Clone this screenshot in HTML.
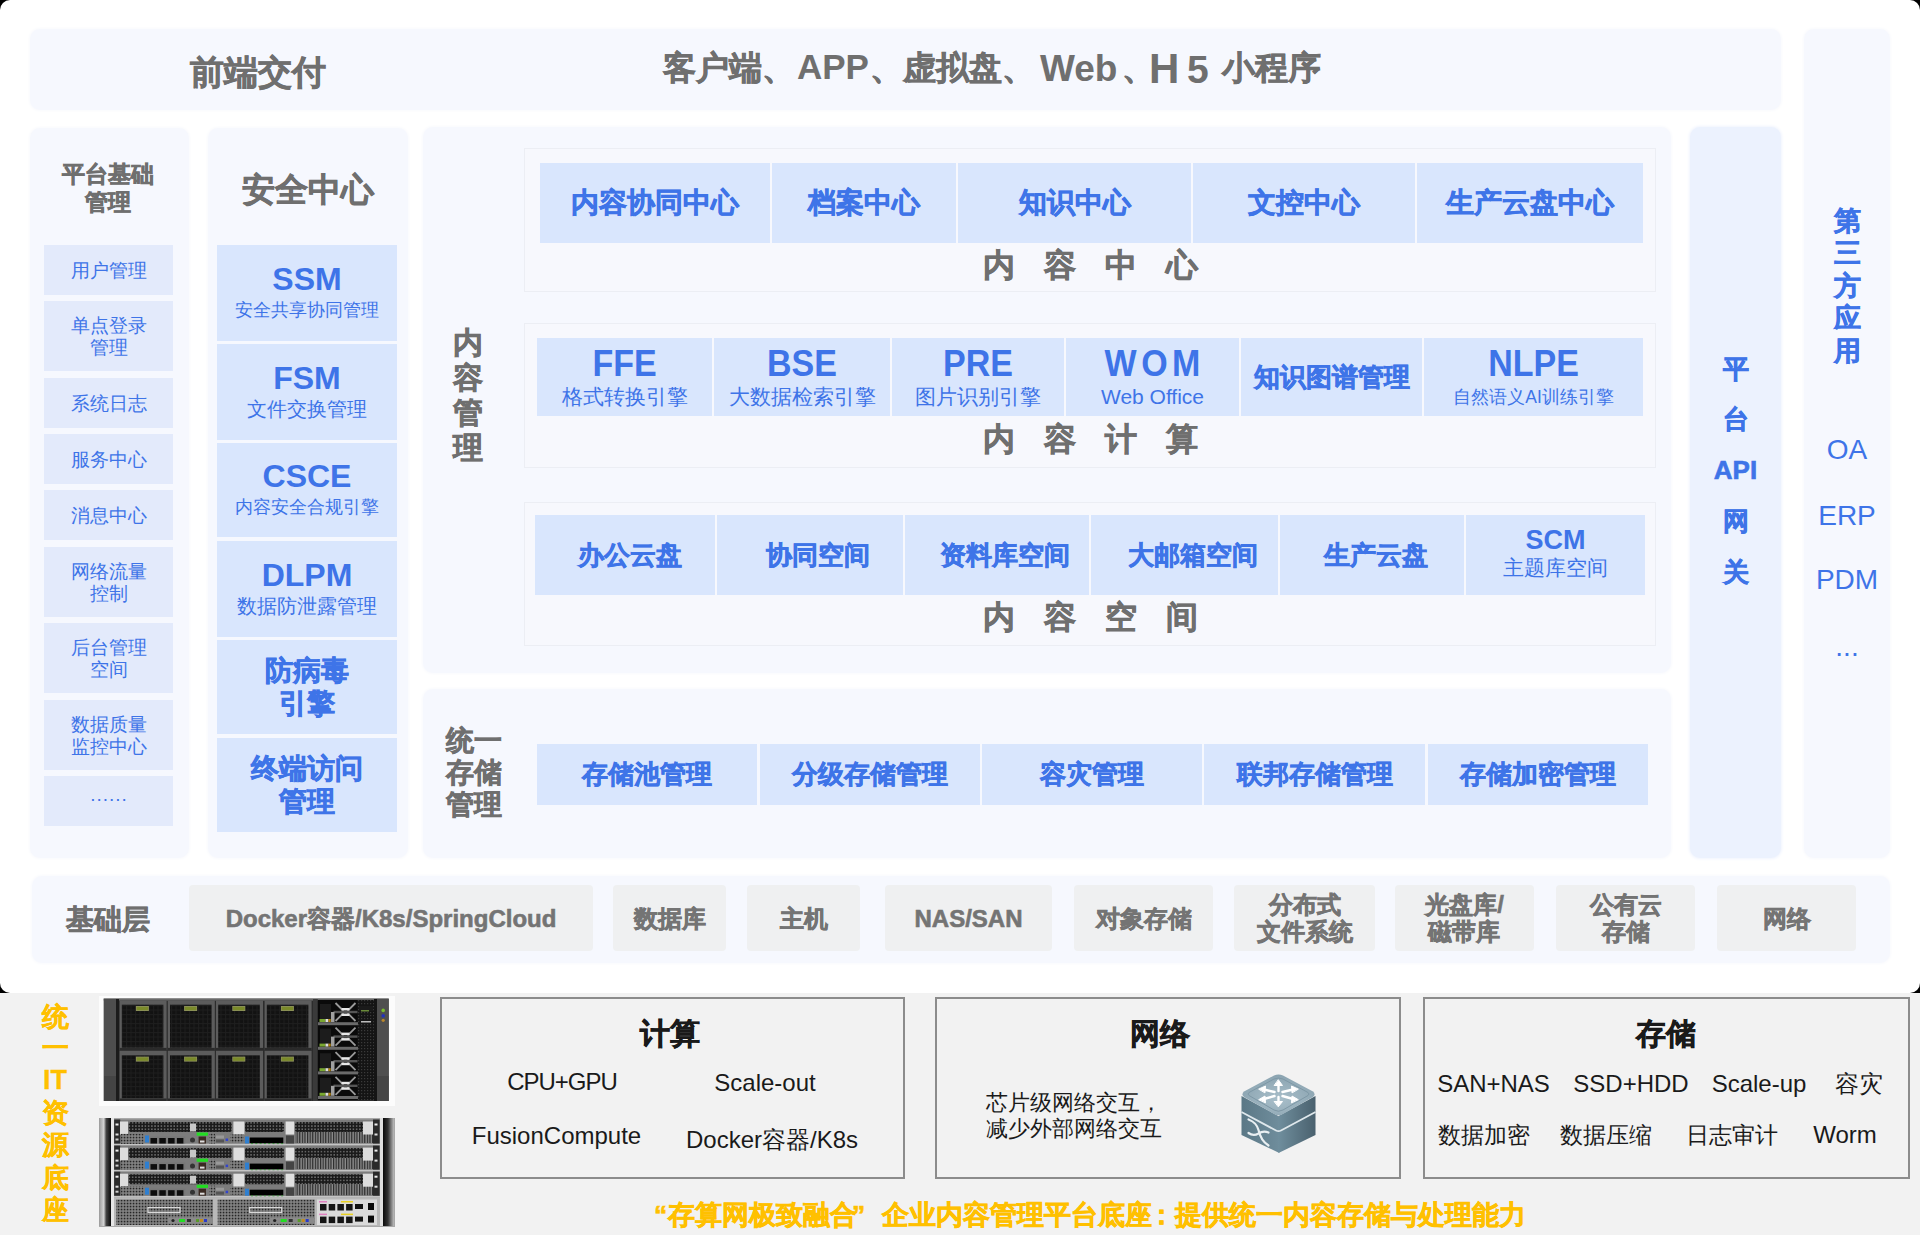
<!DOCTYPE html>
<html><head><meta charset="utf-8">
<style>
html,body{margin:0;padding:0;width:1920px;height:1235px;overflow:hidden;background:#000;}
body{position:relative;font-family:"Liberation Sans",sans-serif;}
.a{position:absolute;box-sizing:border-box;}
.c{position:absolute;box-sizing:border-box;display:flex;align-items:center;justify-content:center;text-align:center;white-space:nowrap;}
.pan{background:#f6f8fe;border-radius:10px;box-shadow:0 0 3px 1px #f9fafd;}
.ibox{background:#f7f8fd;border:1px solid #eceef4;}
.bl{background:#d9e6fd;color:#3e74e8;font-weight:bold;}
.li{background:#e3eafb;color:#3e74e8;font-size:19px;line-height:22px;}
.gt{color:#6f6f6f;font-weight:bold;}
.bs{background:#eff0f1;color:#747474;font-weight:bold;border-radius:4px;font-size:24px;line-height:27px;}
.st{-webkit-text-stroke:0.6px currentColor;}
.sub{font-weight:normal;display:block;-webkit-text-stroke:0;}
.bx{border:2px solid #8c8c8c;background:#f2f2f2;}
</style></head><body>
<div class="a " style="left:0px;top:0px;width:1920px;height:993px;background:#fff;border-radius:10px;"></div>
<div class="a " style="left:0px;top:993px;width:1920px;height:242px;background:#f2f2f2;"></div>
<div class="a pan" style="left:30px;top:29px;width:1751px;height:81px;"></div>
<div class="a pan" style="left:1804px;top:29px;width:86px;height:829px;"></div>
<div class="a pan" style="left:30px;top:128px;width:159px;height:730px;"></div>
<div class="a pan" style="left:208px;top:128px;width:200px;height:730px;"></div>
<div class="a pan" style="left:423px;top:127px;width:1248px;height:546px;"></div>
<div class="a pan" style="left:423px;top:689px;width:1248px;height:169px;"></div>
<div class="a pan" style="left:1690px;top:127px;width:91px;height:731px;background:#ecf2fe;box-shadow:0 0 3px 1px #f0f4fe;"></div>
<div class="a pan" style="left:32px;top:876px;width:1858px;height:87px;"></div>
<div class="c gt st" style="left:150px;top:40px;width:215px;height:65px;font-size:34px;">前端交付</div>
<div class="a st" style="left:663px;top:51px;width:300px;height:37px;color:#6f6f6f;font-weight:bold;white-space:nowrap;font-size:33px;line-height:33px;">客户端、</div>
<div class="a " style="left:797px;top:49px;width:300px;height:39px;color:#6f6f6f;font-weight:bold;white-space:nowrap;font-size:35px;line-height:35px;">APP</div>
<div class="a st" style="left:870px;top:51px;width:300px;height:37px;color:#6f6f6f;font-weight:bold;white-space:nowrap;font-size:33px;line-height:33px;">、虚拟盘、</div>
<div class="a " style="left:1040px;top:50px;width:300px;height:41px;color:#6f6f6f;font-weight:bold;white-space:nowrap;font-size:37px;line-height:37px;">Web</div>
<div class="a st" style="left:1122px;top:51px;width:300px;height:37px;color:#6f6f6f;font-weight:bold;white-space:nowrap;font-size:33px;line-height:33px;">、</div>
<div class="a " style="left:1149px;top:48px;width:300px;height:46px;color:#6f6f6f;font-weight:bold;white-space:nowrap;font-size:42px;line-height:42px;">H</div>
<div class="a " style="left:1187px;top:50px;width:300px;height:43px;color:#6f6f6f;font-weight:bold;white-space:nowrap;font-size:39px;line-height:39px;">5</div>
<div class="a st" style="left:1222px;top:51px;width:300px;height:37px;color:#6f6f6f;font-weight:bold;white-space:nowrap;font-size:33px;line-height:33px;">小程序</div>
<div class="c gt st" style="left:28px;top:150px;width:159px;height:76px;font-size:23px;line-height:28px;">平台基础<br>管理</div>
<div class="c li" style="left:44px;top:245px;width:129px;height:50px;padding-top:2px;">用户管理</div>
<div class="c li" style="left:44px;top:301px;width:129px;height:70px;padding-top:2px;">单点登录<br>管理</div>
<div class="c li" style="left:44px;top:378px;width:129px;height:50px;padding-top:2px;">系统日志</div>
<div class="c li" style="left:44px;top:434px;width:129px;height:50px;padding-top:2px;">服务中心</div>
<div class="c li" style="left:44px;top:490px;width:129px;height:50px;padding-top:2px;">消息中心</div>
<div class="c li" style="left:44px;top:547px;width:129px;height:70px;padding-top:2px;">网络流量<br>控制</div>
<div class="c li" style="left:44px;top:623px;width:129px;height:70px;padding-top:2px;">后台管理<br>空间</div>
<div class="c li" style="left:44px;top:700px;width:129px;height:70px;padding-top:2px;">数据质量<br>监控中心</div>
<div class="c li" style="left:44px;top:776px;width:129px;height:50px;padding-bottom:12px;letter-spacing:1px;padding-left:1px;">......</div>
<div class="c gt st" style="left:208px;top:160px;width:200px;height:60px;font-size:33px;">安全中心</div>
<div class="c bl" style="left:217px;top:245px;width:180px;height:96px;flex-direction:column;"><span style="font-size:32px;line-height:32px;margin-top:-1px;">SSM</span><span class="sub" style="font-size:18px;line-height:24px;margin-top:3px;">安全共享协同管理</span></div>
<div class="c bl" style="left:217px;top:344px;width:180px;height:96px;flex-direction:column;"><span style="font-size:32px;line-height:32px;margin-top:-1px;">FSM</span><span class="sub" style="font-size:19.5px;line-height:24px;margin-top:3px;">文件交换管理</span></div>
<div class="c bl" style="left:217px;top:443px;width:180px;height:94px;flex-direction:column;"><span style="font-size:32px;line-height:32px;margin-top:-1px;">CSCE</span><span class="sub" style="font-size:17.6px;line-height:24px;margin-top:3px;">内容安全合规引擎</span></div>
<div class="c bl" style="left:217px;top:541px;width:180px;height:96px;flex-direction:column;"><span style="font-size:32px;line-height:32px;margin-top:-1px;">DLPM</span><span class="sub" style="font-size:19.5px;line-height:24px;margin-top:3px;">数据防泄露管理</span></div>
<div class="c bl st" style="left:217px;top:640px;width:180px;height:94px;font-size:28px;line-height:33px;">防病毒<br>引擎</div>
<div class="c bl st" style="left:217px;top:738px;width:180px;height:94px;font-size:28px;line-height:33px;">终端访问<br>管理</div>
<div class="c gt st" style="left:428px;top:320px;width:80px;height:150px;font-size:30px;line-height:35px;">内<br>容<br>管<br>理</div>
<div class="a ibox" style="left:524px;top:148px;width:1132px;height:144px;"></div>
<div class="a ibox" style="left:524px;top:323px;width:1132px;height:145px;"></div>
<div class="a ibox" style="left:524px;top:502px;width:1132px;height:144px;"></div>
<div class="c bl st" style="left:540px;top:163px;width:230px;height:80px;font-size:28px;">内容协同中心</div>
<div class="c bl st" style="left:772px;top:163px;width:184px;height:80px;font-size:28px;">档案中心</div>
<div class="c bl st" style="left:958px;top:163px;width:233px;height:80px;font-size:28px;">知识中心</div>
<div class="c bl st" style="left:1193px;top:163px;width:222px;height:80px;font-size:28px;">文控中心</div>
<div class="c bl st" style="left:1417px;top:163px;width:226px;height:80px;font-size:28px;">生产云盘中心</div>
<div class="c gt st" style="left:977px;top:244px;width:44px;height:44px;font-size:32px;">内</div>
<div class="c gt st" style="left:1038px;top:244px;width:44px;height:44px;font-size:32px;">容</div>
<div class="c gt st" style="left:1099px;top:244px;width:44px;height:44px;font-size:32px;">中</div>
<div class="c gt st" style="left:1160px;top:244px;width:44px;height:44px;font-size:32px;">心</div>
<div class="c bl" style="left:537px;top:338px;width:175px;height:78px;flex-direction:column;padding-top:3px;"><span style="font-size:34px;line-height:32px;display:inline-block;transform:scaleY(1.08);">FFE</span><span class="sub" style="font-size:21px;line-height:28px;margin-top:4px;">格式转换引擎</span></div>
<div class="c bl" style="left:714px;top:338px;width:176px;height:78px;flex-direction:column;padding-top:3px;"><span style="font-size:34px;line-height:32px;display:inline-block;transform:scaleY(1.08);">BSE</span><span class="sub" style="font-size:21px;line-height:28px;margin-top:4px;">大数据检索引擎</span></div>
<div class="c bl" style="left:892px;top:338px;width:172px;height:78px;flex-direction:column;padding-top:3px;"><span style="font-size:34px;line-height:32px;display:inline-block;transform:scaleY(1.08);">PRE</span><span class="sub" style="font-size:21px;line-height:28px;margin-top:4px;">图片识别引擎</span></div>
<div class="c bl" style="left:1066px;top:338px;width:173px;height:78px;flex-direction:column;padding-top:3px;"><span style="font-size:34px;line-height:32px;display:inline-block;transform:scaleY(1.08);letter-spacing:4.5px;padding-left:4.5px;">WOM</span><span class="sub" style="font-size:21px;line-height:28px;margin-top:4px;">Web Office</span></div>
<div class="c bl st" style="left:1241px;top:338px;width:181px;height:78px;font-size:26px;">知识图谱管理</div>
<div class="c bl" style="left:1424px;top:338px;width:219px;height:78px;flex-direction:column;padding-top:3px;"><span style="font-size:34px;line-height:32px;display:inline-block;transform:scaleY(1.08);">NLPE</span><span class="sub" style="font-size:17.5px;line-height:28px;margin-top:4px;">自然语义AI训练引擎</span></div>
<div class="c gt st" style="left:977px;top:418px;width:44px;height:44px;font-size:32px;">内</div>
<div class="c gt st" style="left:1038px;top:418px;width:44px;height:44px;font-size:32px;">容</div>
<div class="c gt st" style="left:1099px;top:418px;width:44px;height:44px;font-size:32px;">计</div>
<div class="c gt st" style="left:1160px;top:418px;width:44px;height:44px;font-size:32px;">算</div>
<div class="c bl st" style="left:535px;top:515px;width:180px;height:80px;font-size:26px;padding-left:10px;">办公云盘</div>
<div class="c bl st" style="left:717px;top:515px;width:186px;height:80px;font-size:26px;padding-left:16px;">协同空间</div>
<div class="c bl st" style="left:905px;top:515px;width:184px;height:80px;font-size:26px;padding-left:15.0px;">资料库空间</div>
<div class="c bl st" style="left:1091px;top:515px;width:187px;height:80px;font-size:26px;padding-left:16px;">大邮箱空间</div>
<div class="c bl st" style="left:1280px;top:515px;width:184px;height:80px;font-size:26px;padding-left:8px;">生产云盘</div>
<div class="c bl" style="left:1466px;top:515px;width:179px;height:80px;flex-direction:column;"><span style="font-size:27px;line-height:30px;margin-top:-4px;">SCM</span><span class="sub" style="font-size:21px;line-height:26px;">主题库空间</span></div>
<div class="c gt st" style="left:977px;top:596px;width:44px;height:44px;font-size:32px;">内</div>
<div class="c gt st" style="left:1038px;top:596px;width:44px;height:44px;font-size:32px;">容</div>
<div class="c gt st" style="left:1099px;top:596px;width:44px;height:44px;font-size:32px;">空</div>
<div class="c gt st" style="left:1160px;top:596px;width:44px;height:44px;font-size:32px;">间</div>
<div class="c gt st" style="left:430px;top:708px;width:88px;height:130px;font-size:28px;line-height:32px;">统一<br>存储<br>管理</div>
<div class="c bl st" style="left:537px;top:744px;width:220px;height:61px;font-size:26px;">存储池管理</div>
<div class="c bl st" style="left:760px;top:744px;width:220px;height:61px;font-size:26px;">分级存储管理</div>
<div class="c bl st" style="left:982px;top:744px;width:220px;height:61px;font-size:26px;">容灾管理</div>
<div class="c bl st" style="left:1204px;top:744px;width:221px;height:61px;font-size:26px;">联邦存储管理</div>
<div class="c bl st" style="left:1428px;top:744px;width:220px;height:61px;font-size:26px;">存储加密管理</div>
<div class="c bl st" style="left:1690px;top:349.5px;width:91px;height:40.0px;background:none;font-size:26px;">平</div>
<div class="c bl st" style="left:1690px;top:399px;width:91px;height:40px;background:none;font-size:26px;">台</div>
<div class="c bl st" style="left:1690px;top:450px;width:91px;height:40px;background:none;font-size:26px;">API</div>
<div class="c bl st" style="left:1690px;top:501px;width:91px;height:40px;background:none;font-size:26px;">网</div>
<div class="c bl st" style="left:1690px;top:552px;width:91px;height:40px;background:none;font-size:26px;">关</div>
<div class="c bl st" style="left:1804px;top:205.0px;width:86px;height:32.0px;background:none;font-size:27px;">第</div>
<div class="c bl st" style="left:1804px;top:237.4px;width:86px;height:31.99999999999997px;background:none;font-size:27px;">三</div>
<div class="c bl st" style="left:1804px;top:269.8px;width:86px;height:32.0px;background:none;font-size:27px;">方</div>
<div class="c bl st" style="left:1804px;top:302.2px;width:86px;height:32.0px;background:none;font-size:27px;">应</div>
<div class="c bl st" style="left:1804px;top:334.6px;width:86px;height:32.0px;background:none;font-size:27px;">用</div>
<div class="c " style="left:1804px;top:430px;width:86px;height:40px;color:#3e74e8;font-size:28px;">OA</div>
<div class="c " style="left:1804px;top:495.5px;width:86px;height:40.0px;color:#3e74e8;font-size:28px;">ERP</div>
<div class="c " style="left:1804px;top:559.5px;width:86px;height:40.0px;color:#3e74e8;font-size:28px;">PDM</div>
<div class="c " style="left:1804px;top:627px;width:86px;height:40px;color:#3e74e8;font-size:28px;">...</div>
<div class="c gt st" style="left:40px;top:895px;width:135px;height:50px;font-size:28px;">基础层</div>
<div class="c bs st" style="left:189px;top:885px;width:404px;height:66px;">Docker容器/K8s/SpringCloud</div>
<div class="c bs st" style="left:613px;top:885px;width:113px;height:66px;">数据库</div>
<div class="c bs st" style="left:747px;top:885px;width:113px;height:66px;">主机</div>
<div class="c bs st" style="left:885px;top:885px;width:167px;height:66px;">NAS/SAN</div>
<div class="c bs st" style="left:1074px;top:885px;width:139px;height:66px;">对象存储</div>
<div class="c bs st" style="left:1234px;top:885px;width:141px;height:66px;">分布式<br>文件系统</div>
<div class="c bs st" style="left:1395px;top:885px;width:139px;height:66px;">光盘库/<br>磁带库</div>
<div class="c bs st" style="left:1556px;top:885px;width:139px;height:66px;">公有云<br>存储</div>
<div class="c bs st" style="left:1717px;top:885px;width:139px;height:66px;">网络</div>
<div class="c st" style="left:30px;top:1000.5px;width:50px;height:32.0px;color:#ffc000;font-weight:bold;font-size:27px;-webkit-text-stroke:0.3px #ffc000;">统</div>
<div class="c st" style="left:30px;top:1032px;width:50px;height:32px;color:#ffc000;font-weight:bold;font-size:27px;-webkit-text-stroke:0.3px #ffc000;">一</div>
<div class="c st" style="left:30px;top:1064px;width:50px;height:32px;color:#ffc000;font-weight:bold;font-size:27px;-webkit-text-stroke:0.3px #ffc000;">IT</div>
<div class="c st" style="left:30px;top:1097px;width:50px;height:32px;color:#ffc000;font-weight:bold;font-size:27px;-webkit-text-stroke:0.3px #ffc000;">资</div>
<div class="c st" style="left:30px;top:1129px;width:50px;height:32px;color:#ffc000;font-weight:bold;font-size:27px;-webkit-text-stroke:0.3px #ffc000;">源</div>
<div class="c st" style="left:30px;top:1161.5px;width:50px;height:32.0px;color:#ffc000;font-weight:bold;font-size:27px;-webkit-text-stroke:0.3px #ffc000;">底</div>
<div class="c st" style="left:30px;top:1193.5px;width:50px;height:32.0px;color:#ffc000;font-weight:bold;font-size:27px;-webkit-text-stroke:0.3px #ffc000;">座</div>
<svg class="a" style="left:99px;top:996px;" width="296" height="110" viewBox="0 0 296 110">
<defs>
<pattern id="bm" width="4.5" height="4.5" patternUnits="userSpaceOnUse"><rect width="4.5" height="4.5" fill="#121212"/><rect x="0" y="0" width="4.5" height="1" fill="#1e1e1e"/><rect x="0" y="0" width="1" height="4.5" fill="#1e1e1e"/></pattern>
<pattern id="rg" width="3" height="3" patternUnits="userSpaceOnUse"><rect width="3" height="3" fill="#141414"/><rect x="1" y="1" width="1.2" height="1.2" fill="#3a3a3a"/></pattern>
</defs>
<rect x="0" y="0" width="296" height="110" fill="#fcfcfc"/>
<rect x="4.7" y="2.6" width="285" height="102.4" fill="#2c2c2c"/>
<rect x="4.7" y="2.6" width="285" height="2" fill="#6a6a6a"/>
<rect x="5" y="3" width="12" height="102" fill="#4e4e4e"/><rect x="5" y="80" width="12" height="25" fill="#444"/><rect x="17" y="3" width="3" height="102" fill="#1b1b1b"/>
<rect x="20.6" y="4.4" width="47" height="50" fill="#5c5c5c"/>
<rect x="22.8" y="8.7" width="41.6" height="43" fill="url(#bm)"/>
<rect x="20.6" y="51.9" width="47" height="2.5" fill="#2a2a2a"/>
<rect x="36.900000000000006" y="10.0" width="13" height="5" fill="#8f9160"/>
<rect x="37.6" y="10.8" width="11.6" height="3.4" fill="#7a8a2a"/>
<rect x="68.8" y="4.4" width="47" height="50" fill="#5c5c5c"/>
<rect x="71.0" y="8.7" width="41.6" height="43" fill="url(#bm)"/>
<rect x="68.8" y="51.9" width="47" height="2.5" fill="#2a2a2a"/>
<rect x="85.1" y="10.0" width="13" height="5" fill="#8f9160"/>
<rect x="85.8" y="10.8" width="11.6" height="3.4" fill="#7a8a2a"/>
<rect x="117" y="4.4" width="47" height="50" fill="#5c5c5c"/>
<rect x="119.2" y="8.7" width="41.6" height="43" fill="url(#bm)"/>
<rect x="117" y="51.9" width="47" height="2.5" fill="#2a2a2a"/>
<rect x="133.3" y="10.0" width="13" height="5" fill="#8f9160"/>
<rect x="134" y="10.8" width="11.6" height="3.4" fill="#7a8a2a"/>
<rect x="165.6" y="4.4" width="47" height="50" fill="#5c5c5c"/>
<rect x="167.79999999999998" y="8.7" width="41.6" height="43" fill="url(#bm)"/>
<rect x="165.6" y="51.9" width="47" height="2.5" fill="#2a2a2a"/>
<rect x="181.9" y="10.0" width="13" height="5" fill="#8f9160"/>
<rect x="182.6" y="10.8" width="11.6" height="3.4" fill="#7a8a2a"/>
<rect x="20.6" y="55" width="47" height="50" fill="#5c5c5c"/>
<rect x="22.8" y="59.3" width="41.6" height="43" fill="url(#bm)"/>
<rect x="20.6" y="102.5" width="47" height="2.5" fill="#2a2a2a"/>
<rect x="36.900000000000006" y="60.6" width="13" height="5" fill="#8f9160"/>
<rect x="37.6" y="61.4" width="11.6" height="3.4" fill="#7a8a2a"/>
<rect x="68.8" y="55" width="47" height="50" fill="#5c5c5c"/>
<rect x="71.0" y="59.3" width="41.6" height="43" fill="url(#bm)"/>
<rect x="68.8" y="102.5" width="47" height="2.5" fill="#2a2a2a"/>
<rect x="85.1" y="60.6" width="13" height="5" fill="#8f9160"/>
<rect x="85.8" y="61.4" width="11.6" height="3.4" fill="#7a8a2a"/>
<rect x="117" y="55" width="47" height="50" fill="#5c5c5c"/>
<rect x="119.2" y="59.3" width="41.6" height="43" fill="url(#bm)"/>
<rect x="117" y="102.5" width="47" height="2.5" fill="#2a2a2a"/>
<rect x="133.3" y="60.6" width="13" height="5" fill="#8f9160"/>
<rect x="134" y="61.4" width="11.6" height="3.4" fill="#7a8a2a"/>
<rect x="165.6" y="55" width="47" height="50" fill="#5c5c5c"/>
<rect x="167.79999999999998" y="59.3" width="41.6" height="43" fill="url(#bm)"/>
<rect x="165.6" y="102.5" width="47" height="2.5" fill="#2a2a2a"/>
<rect x="181.9" y="60.6" width="13" height="5" fill="#8f9160"/>
<rect x="182.6" y="61.4" width="11.6" height="3.4" fill="#7a8a2a"/>
<rect x="214" y="3" width="4.8" height="102" fill="#3a3a3a"/>
<rect x="218.8" y="4" width="40" height="100" fill="#0a0a0a"/>
<rect x="219" y="26.2" width="40" height="3" fill="#6a6a6a"/>
<rect x="221" y="8.0" width="11" height="16" fill="#1c1c1c"/>
<path d="M236.5 7.0 L244.5 15.0 M256.5 7.0 L248.5 15.0 M236.5 25.0 L244.5 17.0 M256.5 25.0 L248.5 17.0" stroke="#9a9a9a" stroke-width="1.8"/>
<rect x="242.5" y="12.0" width="8" height="2.5" fill="#e8e8e8"/><rect x="242.5" y="17.5" width="8" height="2.5" fill="#e8e8e8"/>
<rect x="234.5" y="14.8" width="24" height="2.4" fill="#555"/>
<rect x="232" y="16.0" width="3.5" height="10" fill="#a0a0a0"/>
<rect x="220.5" y="23.0" width="6" height="3" fill="#7aa832"/><rect x="226.5" y="23.0" width="3" height="3" fill="#e0e0e0"/><rect x="229.5" y="23.0" width="2.2" height="3" fill="#b8860b"/>
<rect x="219" y="50.8" width="40" height="3" fill="#6a6a6a"/>
<rect x="221" y="32.6" width="11" height="16" fill="#1c1c1c"/>
<path d="M236.5 31.6 L244.5 39.6 M256.5 31.6 L248.5 39.6 M236.5 49.6 L244.5 41.6 M256.5 49.6 L248.5 41.6" stroke="#9a9a9a" stroke-width="1.8"/>
<rect x="242.5" y="36.6" width="8" height="2.5" fill="#e8e8e8"/><rect x="242.5" y="42.1" width="8" height="2.5" fill="#e8e8e8"/>
<rect x="234.5" y="39.4" width="24" height="2.4" fill="#555"/>
<rect x="232" y="40.6" width="3.5" height="10" fill="#a0a0a0"/>
<rect x="220.5" y="47.6" width="6" height="3" fill="#7aa832"/><rect x="226.5" y="47.6" width="3" height="3" fill="#e0e0e0"/><rect x="229.5" y="47.6" width="2.2" height="3" fill="#b8860b"/>
<rect x="219" y="75.4" width="40" height="3" fill="#6a6a6a"/>
<rect x="221" y="57.2" width="11" height="16" fill="#1c1c1c"/>
<path d="M236.5 56.2 L244.5 64.2 M256.5 56.2 L248.5 64.2 M236.5 74.2 L244.5 66.2 M256.5 74.2 L248.5 66.2" stroke="#9a9a9a" stroke-width="1.8"/>
<rect x="242.5" y="61.2" width="8" height="2.5" fill="#e8e8e8"/><rect x="242.5" y="66.7" width="8" height="2.5" fill="#e8e8e8"/>
<rect x="234.5" y="64.0" width="24" height="2.4" fill="#555"/>
<rect x="232" y="65.2" width="3.5" height="10" fill="#a0a0a0"/>
<rect x="220.5" y="72.2" width="6" height="3" fill="#7aa832"/><rect x="226.5" y="72.2" width="3" height="3" fill="#e0e0e0"/><rect x="229.5" y="72.2" width="2.2" height="3" fill="#b8860b"/>
<rect x="219" y="100.00000000000001" width="40" height="3" fill="#6a6a6a"/>
<rect x="221" y="81.80000000000001" width="11" height="16" fill="#1c1c1c"/>
<path d="M236.5 80.80000000000001 L244.5 88.80000000000001 M256.5 80.80000000000001 L248.5 88.80000000000001 M236.5 98.80000000000001 L244.5 90.80000000000001 M256.5 98.80000000000001 L248.5 90.80000000000001" stroke="#9a9a9a" stroke-width="1.8"/>
<rect x="242.5" y="85.80000000000001" width="8" height="2.5" fill="#e8e8e8"/><rect x="242.5" y="91.30000000000001" width="8" height="2.5" fill="#e8e8e8"/>
<rect x="234.5" y="88.60000000000001" width="24" height="2.4" fill="#555"/>
<rect x="232" y="89.80000000000001" width="3.5" height="10" fill="#a0a0a0"/>
<rect x="220.5" y="96.80000000000001" width="6" height="3" fill="#7aa832"/><rect x="226.5" y="96.80000000000001" width="3" height="3" fill="#e0e0e0"/><rect x="229.5" y="96.80000000000001" width="2.2" height="3" fill="#b8860b"/>
<rect x="259" y="4" width="16" height="100" fill="url(#rg)"/>
<rect x="260" y="10" width="14" height="5" fill="#1a1a1a"/><rect x="262" y="14" width="8" height="1.5" fill="#6a8a3a"/><rect x="262" y="25" width="10" height="1.5" fill="#bbb"/>
<rect x="275" y="3" width="3" height="102" fill="#151515"/><rect x="278" y="3" width="11.6" height="102" fill="#4f4f4f"/><rect x="278" y="80" width="11.6" height="25" fill="#454545"/>
<circle cx="284.2" cy="14.4" r="1.8" fill="#7bbb2e"/><circle cx="284.2" cy="19.8" r="1.8" fill="#2233bb"/><circle cx="284.2" cy="24.3" r="1.6" fill="#b8862b"/>
</svg>
<svg class="a" style="left:99px;top:1118px;" width="296" height="109" viewBox="0 0 296 109">
<defs>
<linearGradient id="ear" x1="0" x2="1"><stop offset="0" stop-color="#999"/><stop offset="0.4" stop-color="#d5d5d5"/><stop offset="0.6" stop-color="#444"/><stop offset="1" stop-color="#0a0a0a"/></linearGradient>
<linearGradient id="ear2" x1="0" x2="1"><stop offset="0" stop-color="#0a0a0a"/><stop offset="0.45" stop-color="#333"/><stop offset="1" stop-color="#bdbdbd"/></linearGradient>
<pattern id="g1" width="3.2" height="3.2" patternUnits="userSpaceOnUse"><rect width="3.2" height="3.2" fill="#1a1a1a"/><rect x="1" y="1" width="1.3" height="1.3" fill="#8a8a8a"/></pattern>
<pattern id="g2" width="2.6" height="3" patternUnits="userSpaceOnUse"><rect width="2.6" height="3" fill="#8c8c8c"/><rect x="0" y="0" width="1.2" height="3" fill="#2a2a2a"/></pattern>
<pattern id="g3" width="3" height="3" patternUnits="userSpaceOnUse"><rect width="3" height="3" fill="#8a8a8a"/><rect x="0.7" y="0.7" width="1.7" height="1.7" fill="#262626"/></pattern>
</defs>
<rect x="0" y="0" width="296" height="109" fill="#a9a9a9"/>
<rect x="0" y="0" width="12" height="108" fill="url(#ear)"/>
<rect x="12" y="0" width="3" height="108" fill="#e6e6e6"/>
<rect x="281" y="0" width="3" height="108" fill="#e0e0e0"/>
<rect x="284" y="0" width="11" height="108" fill="url(#ear2)"/>
<rect x="15" y="1.5" width="266" height="26" fill="#7c7c7c"/>
<rect x="15" y="25.7" width="266" height="1.8" fill="#c4c4c4"/>
<rect x="15.2" y="1.5" width="6" height="24" fill="#2a2a2a"/><rect x="16.5" y="5.5" width="3" height="2" fill="#eee"/><rect x="16.5" y="15.5" width="3" height="2" fill="#ddd"/><rect x="16.5" y="20.5" width="3" height="2" fill="#ccc"/>
<rect x="274" y="1.5" width="6.5" height="24" fill="#2a2a2a"/><rect x="275.5" y="5.5" width="3" height="2" fill="#eee"/><rect x="275.5" y="15.5" width="3" height="2" fill="#ddd"/>
<rect x="21" y="3.5" width="8" height="13" fill="#dcdcdc"/>
<rect x="29.7" y="4.0" width="103" height="10" rx="2" fill="url(#g1)"/>
<rect x="91" y="5.5" width="6" height="8" fill="#c8c8c8"/>
<rect x="134.4" y="3.5" width="11" height="13" fill="#dedede"/>
<rect x="146" y="4.0" width="39" height="10" rx="2" fill="url(#g1)"/>
<rect x="186.6" y="3.5" width="8.6" height="13" fill="#e0e0e0"/>
<rect x="196" y="4.0" width="68" height="10" rx="2" fill="url(#g1)"/>
<rect x="196" y="14.0" width="78" height="11" fill="url(#g2)"/>
<rect x="264" y="3.5" width="10" height="13" fill="#dcdcdc"/>
<rect x="22" y="15.9" width="22.5" height="10" fill="url(#g3)"/>
<rect x="46" y="17.5" width="4" height="7" fill="#2f7fd0"/>
<rect x="50.8" y="18.5" width="35.5" height="7" fill="#777"/>
<rect x="51.5" y="20.0" width="6.5" height="5.5" fill="#0d0d0d"/>
<rect x="60.3" y="20.0" width="6.5" height="5.5" fill="#0d0d0d"/>
<rect x="69.1" y="20.0" width="6.5" height="5.5" fill="#0d0d0d"/>
<rect x="77.9" y="20.0" width="6.5" height="5.5" fill="#0d0d0d"/>
<circle cx="93.5" cy="22.0" r="2.5" fill="#333"/>
<rect x="97.7" y="14.5" width="11.3" height="3.2" fill="#22dd22"/><rect x="99.6" y="18.5" width="7.4" height="7" fill="#3a2a22"/><rect x="101" y="22.5" width="4.5" height="2" fill="#ddd"/>
<rect x="110" y="15.5" width="6" height="10" fill="url(#g3)"/><rect x="117" y="17.5" width="8" height="3" fill="#999"/><rect x="117" y="21.5" width="8" height="3" fill="#555"/>
<rect x="126.6" y="20.5" width="2.5" height="2.5" fill="#3344cc"/><rect x="131" y="16.5" width="14" height="8" fill="url(#g3)"/>
<rect x="146" y="18.5" width="4" height="7" fill="#2f7fd0"/><rect x="150.7" y="19.5" width="33.6" height="5.6" fill="#000"/>
<rect x="152.0" y="25.1" width="2" height="1" fill="#3a8a3a"/>
<rect x="156.3" y="25.1" width="2" height="1" fill="#3a8a3a"/>
<rect x="160.6" y="25.1" width="2" height="1" fill="#3a8a3a"/>
<rect x="164.9" y="25.1" width="2" height="1" fill="#3a8a3a"/>
<rect x="169.2" y="25.1" width="2" height="1" fill="#3a8a3a"/>
<rect x="173.5" y="25.1" width="2" height="1" fill="#3a8a3a"/>
<rect x="177.8" y="25.1" width="2" height="1" fill="#3a8a3a"/>
<rect x="182.1" y="25.1" width="2" height="1" fill="#3a8a3a"/>
<rect x="187" y="17.5" width="8" height="8" fill="#444"/>
<rect x="15" y="27.6" width="266" height="26" fill="#7c7c7c"/>
<rect x="15" y="51.8" width="266" height="1.8" fill="#c4c4c4"/>
<rect x="15.2" y="27.6" width="6" height="24" fill="#2a2a2a"/><rect x="16.5" y="31.6" width="3" height="2" fill="#eee"/><rect x="16.5" y="41.6" width="3" height="2" fill="#ddd"/><rect x="16.5" y="46.6" width="3" height="2" fill="#ccc"/>
<rect x="274" y="27.6" width="6.5" height="24" fill="#2a2a2a"/><rect x="275.5" y="31.6" width="3" height="2" fill="#eee"/><rect x="275.5" y="41.6" width="3" height="2" fill="#ddd"/>
<rect x="21" y="29.6" width="8" height="13" fill="#dcdcdc"/>
<rect x="29.7" y="30.1" width="103" height="10" rx="2" fill="url(#g1)"/>
<rect x="91" y="31.6" width="6" height="8" fill="#c8c8c8"/>
<rect x="134.4" y="29.6" width="11" height="13" fill="#dedede"/>
<rect x="146" y="30.1" width="39" height="10" rx="2" fill="url(#g1)"/>
<rect x="186.6" y="29.6" width="8.6" height="13" fill="#e0e0e0"/>
<rect x="196" y="30.1" width="68" height="10" rx="2" fill="url(#g1)"/>
<rect x="196" y="40.1" width="78" height="11" fill="url(#g2)"/>
<rect x="264" y="29.6" width="10" height="13" fill="#dcdcdc"/>
<rect x="22" y="42.0" width="22.5" height="10" fill="url(#g3)"/>
<rect x="46" y="43.6" width="4" height="7" fill="#2f7fd0"/>
<rect x="50.8" y="44.6" width="35.5" height="7" fill="#777"/>
<rect x="51.5" y="46.1" width="6.5" height="5.5" fill="#0d0d0d"/>
<rect x="60.3" y="46.1" width="6.5" height="5.5" fill="#0d0d0d"/>
<rect x="69.1" y="46.1" width="6.5" height="5.5" fill="#0d0d0d"/>
<rect x="77.9" y="46.1" width="6.5" height="5.5" fill="#0d0d0d"/>
<circle cx="93.5" cy="48.1" r="2.5" fill="#333"/>
<rect x="97.7" y="40.6" width="11.3" height="3.2" fill="#22dd22"/><rect x="99.6" y="44.6" width="7.4" height="7" fill="#3a2a22"/><rect x="101" y="48.6" width="4.5" height="2" fill="#ddd"/>
<rect x="110" y="41.6" width="6" height="10" fill="url(#g3)"/><rect x="117" y="43.6" width="8" height="3" fill="#999"/><rect x="117" y="47.6" width="8" height="3" fill="#555"/>
<rect x="126.6" y="46.6" width="2.5" height="2.5" fill="#3344cc"/><rect x="131" y="42.6" width="14" height="8" fill="url(#g3)"/>
<rect x="146" y="44.6" width="4" height="7" fill="#2f7fd0"/><rect x="150.7" y="45.6" width="33.6" height="5.6" fill="#000"/>
<rect x="152.0" y="51.2" width="2" height="1" fill="#3a8a3a"/>
<rect x="156.3" y="51.2" width="2" height="1" fill="#3a8a3a"/>
<rect x="160.6" y="51.2" width="2" height="1" fill="#3a8a3a"/>
<rect x="164.9" y="51.2" width="2" height="1" fill="#3a8a3a"/>
<rect x="169.2" y="51.2" width="2" height="1" fill="#3a8a3a"/>
<rect x="173.5" y="51.2" width="2" height="1" fill="#3a8a3a"/>
<rect x="177.8" y="51.2" width="2" height="1" fill="#3a8a3a"/>
<rect x="182.1" y="51.2" width="2" height="1" fill="#3a8a3a"/>
<rect x="187" y="43.6" width="8" height="8" fill="#444"/>
<rect x="15" y="53.7" width="266" height="26" fill="#7c7c7c"/>
<rect x="15" y="77.9" width="266" height="1.8" fill="#c4c4c4"/>
<rect x="15.2" y="53.7" width="6" height="24" fill="#2a2a2a"/><rect x="16.5" y="57.7" width="3" height="2" fill="#eee"/><rect x="16.5" y="67.7" width="3" height="2" fill="#ddd"/><rect x="16.5" y="72.7" width="3" height="2" fill="#ccc"/>
<rect x="274" y="53.7" width="6.5" height="24" fill="#2a2a2a"/><rect x="275.5" y="57.7" width="3" height="2" fill="#eee"/><rect x="275.5" y="67.7" width="3" height="2" fill="#ddd"/>
<rect x="21" y="55.7" width="8" height="13" fill="#dcdcdc"/>
<rect x="29.7" y="56.2" width="103" height="10" rx="2" fill="url(#g1)"/>
<rect x="91" y="57.7" width="6" height="8" fill="#c8c8c8"/>
<rect x="134.4" y="55.7" width="11" height="13" fill="#dedede"/>
<rect x="146" y="56.2" width="39" height="10" rx="2" fill="url(#g1)"/>
<rect x="186.6" y="55.7" width="8.6" height="13" fill="#e0e0e0"/>
<rect x="196" y="56.2" width="68" height="10" rx="2" fill="url(#g1)"/>
<rect x="196" y="66.2" width="78" height="11" fill="url(#g2)"/>
<rect x="264" y="55.7" width="10" height="13" fill="#dcdcdc"/>
<rect x="22" y="68.10000000000001" width="22.5" height="10" fill="url(#g3)"/>
<rect x="46" y="69.7" width="4" height="7" fill="#2f7fd0"/>
<rect x="50.8" y="70.7" width="35.5" height="7" fill="#777"/>
<rect x="51.5" y="72.2" width="6.5" height="5.5" fill="#0d0d0d"/>
<rect x="60.3" y="72.2" width="6.5" height="5.5" fill="#0d0d0d"/>
<rect x="69.1" y="72.2" width="6.5" height="5.5" fill="#0d0d0d"/>
<rect x="77.9" y="72.2" width="6.5" height="5.5" fill="#0d0d0d"/>
<circle cx="93.5" cy="74.2" r="2.5" fill="#333"/>
<rect x="97.7" y="66.7" width="11.3" height="3.2" fill="#22dd22"/><rect x="99.6" y="70.7" width="7.4" height="7" fill="#3a2a22"/><rect x="101" y="74.7" width="4.5" height="2" fill="#ddd"/>
<rect x="110" y="67.7" width="6" height="10" fill="url(#g3)"/><rect x="117" y="69.7" width="8" height="3" fill="#999"/><rect x="117" y="73.7" width="8" height="3" fill="#555"/>
<rect x="126.6" y="72.7" width="2.5" height="2.5" fill="#3344cc"/><rect x="131" y="68.7" width="14" height="8" fill="url(#g3)"/>
<rect x="146" y="70.7" width="4" height="7" fill="#2f7fd0"/><rect x="150.7" y="71.7" width="33.6" height="5.6" fill="#000"/>
<rect x="152.0" y="77.30000000000001" width="2" height="1" fill="#3a8a3a"/>
<rect x="156.3" y="77.30000000000001" width="2" height="1" fill="#3a8a3a"/>
<rect x="160.6" y="77.30000000000001" width="2" height="1" fill="#3a8a3a"/>
<rect x="164.9" y="77.30000000000001" width="2" height="1" fill="#3a8a3a"/>
<rect x="169.2" y="77.30000000000001" width="2" height="1" fill="#3a8a3a"/>
<rect x="173.5" y="77.30000000000001" width="2" height="1" fill="#3a8a3a"/>
<rect x="177.8" y="77.30000000000001" width="2" height="1" fill="#3a8a3a"/>
<rect x="182.1" y="77.30000000000001" width="2" height="1" fill="#3a8a3a"/>
<rect x="187" y="69.7" width="8" height="8" fill="#444"/>
<rect x="15" y="79.5" width="266" height="28.5" fill="#b8b8b8"/>
<rect x="17" y="81.5" width="97" height="25.5" fill="url(#g3)"/>
<rect x="49" y="89.5" width="32" height="5" fill="none" stroke="#d8d8d8" stroke-width="1.2"/>
<rect x="69" y="99.5" width="45" height="6" fill="#8a8a8a"/><circle cx="74" cy="102.5" r="1.6" fill="#222"/><rect x="80" y="101" width="6" height="3" fill="#22dd22"/><rect x="88" y="101" width="4" height="3" fill="#333"/><rect x="97" y="101" width="3" height="3" fill="#5a9a2a"/><rect x="101" y="101" width="3" height="3" fill="#c08a20"/><rect x="105" y="101" width="3" height="3" fill="#2a3acc"/>
<rect x="118.7" y="81.5" width="97" height="25.5" fill="url(#g3)"/>
<rect x="150.7" y="89.5" width="32" height="5" fill="none" stroke="#d8d8d8" stroke-width="1.2"/>
<rect x="170.7" y="99.5" width="45" height="6" fill="#8a8a8a"/><circle cx="175.7" cy="102.5" r="1.6" fill="#222"/><rect x="181.7" y="101" width="6" height="3" fill="#22dd22"/><rect x="189.7" y="101" width="4" height="3" fill="#333"/><rect x="198.7" y="101" width="3" height="3" fill="#5a9a2a"/><rect x="202.7" y="101" width="3" height="3" fill="#c08a20"/><rect x="206.7" y="101" width="3" height="3" fill="#2a3acc"/>
<rect x="218" y="81.5" width="60" height="25.5" fill="#dadada"/>
<rect x="220" y="83.0" width="8" height="1.5" fill="#e080c0"/><rect x="242" y="83.0" width="12" height="1.5" fill="#e8d020"/>
<rect x="221.0" y="86.0" width="6.5" height="6.5" fill="#151515"/>
<rect x="229.7" y="86.0" width="6.5" height="6.5" fill="#151515"/>
<rect x="238.4" y="86.0" width="6.5" height="6.5" fill="#151515"/>
<rect x="247.1" y="86.0" width="6.5" height="6.5" fill="#151515"/>
<rect x="256" y="86.0" width="8" height="5" fill="#111"/><rect x="269" y="85.0" width="6" height="7" fill="#0a0a0a"/>
<rect x="220" y="95.6" width="8" height="1.5" fill="#e080c0"/><rect x="242" y="95.6" width="12" height="1.5" fill="#e8d020"/>
<rect x="221.0" y="98.6" width="6.5" height="6.5" fill="#151515"/>
<rect x="229.7" y="98.6" width="6.5" height="6.5" fill="#151515"/>
<rect x="238.4" y="98.6" width="6.5" height="6.5" fill="#151515"/>
<rect x="247.1" y="98.6" width="6.5" height="6.5" fill="#151515"/>
<rect x="256" y="98.6" width="8" height="5" fill="#111"/><rect x="269" y="97.6" width="6" height="7" fill="#0a0a0a"/>
</svg>
<div class="a bx" style="left:440px;top:997px;width:465px;height:182px;"></div>
<div class="a bx" style="left:935px;top:997px;width:466px;height:182px;"></div>
<div class="a bx" style="left:1423px;top:997px;width:487px;height:182px;"></div>
<div class="c st" style="left:560px;top:1012px;width:220px;height:44px;color:#1a1a1a;font-weight:bold;font-size:30px;">计算</div>
<div class="c " style="left:460px;top:1062px;width:200px;height:40px;color:#1a1a1a;font-size:24px;letter-spacing:-1px;padding-left:4px;">CPU+GPU</div>
<div class="c " style="left:665px;top:1063px;width:200px;height:40px;color:#1a1a1a;font-size:24px;">Scale-out</div>
<div class="c " style="left:453px;top:1116px;width:207px;height:40px;color:#1a1a1a;font-size:24px;">FusionCompute</div>
<div class="c " style="left:672px;top:1120px;width:200px;height:40px;color:#1a1a1a;font-size:24px;">Docker容器/K8s</div>
<div class="c st" style="left:1050px;top:1012px;width:220px;height:44px;color:#1a1a1a;font-weight:bold;font-size:30px;">网络</div>
<div class="a " style="left:986px;top:1090px;width:204px;height:55px;color:#1a1a1a;font-size:22px;line-height:26px;white-space:nowrap;">芯片级网络交互，<br>减少外部网络交互</div>
<svg class="a" style="left:1230px;top:1065px;" width="100" height="95" viewBox="0 0 100 95">
<defs>
<linearGradient id="swr" x1="0" x2="1"><stop offset="0" stop-color="#6f8e9d"/><stop offset="1" stop-color="#4a616e"/></linearGradient>
<linearGradient id="swl" x1="0" x2="1"><stop offset="0" stop-color="#5b7886"/><stop offset="1" stop-color="#6f8d9c"/></linearGradient>
<radialGradient id="swt" cx="0.5" cy="0.6" r="0.6"><stop offset="0" stop-color="#a9bfca"/><stop offset="1" stop-color="#8aa3b0"/></radialGradient>
</defs>
<path d="M11.5 31 L49.3 51.4 L49.3 88 L11.5 70 Z" fill="url(#swl)"/>
<path d="M85.5 31 L48.5 51 L48.5 88 L85.5 70 Z" fill="url(#swr)"/>
<path d="M44 10.5 Q48.5 8.5 53 10.5 L83 26.5 Q86 29 83 32 L53 49 Q48.5 51.5 44 49 L14 32 Q11 29 14 26.5 Z" fill="url(#swt)"/>
<path d="M44 14 Q48.5 12 53 14 L78 27.5 Q80 29 78 30.5 L53 45 Q48.5 47.5 44 45 L19 30.5 Q17 29 19 27.5 Z" fill="none" stroke="#7e98a6" stroke-width="1"/>
<path d="M11.5 47 L46 65.5 Q48.5 66.8 51 65.5 L85.5 47" fill="none" stroke="#dfe8ec" stroke-width="1.8"/>
<g fill="#fff" stroke="#fff" stroke-linecap="round">
<path d="M48.5 26 L48.5 20 M48.5 32 L48.5 37.5 M44.5 27 L34 24.5 M52.5 27 L63 24.5 M44.5 31 L34 34 M52.5 31 L63 34" stroke-width="2.4" fill="none"/>
<path d="M48.5 15 L52.5 20.5 L44.5 20.5 Z" stroke-width="1"/>
<path d="M48.5 41.5 L52.5 36.5 L44.5 36.5 Z" stroke-width="1"/>
<path d="M29 24 L35.5 21 L35 27.5 Z" stroke-width="1"/>
<path d="M68 24 L61.5 21 L62 27.5 Z" stroke-width="1"/>
<path d="M29 34.5 L35 31 L35.5 37.5 Z" stroke-width="1"/>
<path d="M68 34.5 L62 31 L61.5 37.5 Z" stroke-width="1"/>
</g>
<g fill="none" stroke="#e9eff2" stroke-width="2.2" stroke-linecap="round">
<path d="M18.5 54.5 C25 57 27 60 28.5 65 C30 72 33 77 38.5 80.5"/>
<path d="M18.5 68 C22 70.5 25 70.5 28.5 68.5 C31.5 66.5 35 66 38.5 67.5"/>
</g>
</svg>
<div class="c st" style="left:1556px;top:1012px;width:220px;height:44px;color:#1a1a1a;font-weight:bold;font-size:30px;">存储</div>
<div class="c " style="left:1419px;top:1064px;width:149px;height:40px;color:#1a1a1a;font-size:24px;">SAN+NAS</div>
<div class="c " style="left:1556px;top:1064px;width:150px;height:40px;color:#1a1a1a;font-size:24px;">SSD+HDD</div>
<div class="c " style="left:1693px;top:1064px;width:132px;height:40px;color:#1a1a1a;font-size:24px;">Scale-up</div>
<div class="c " style="left:1816px;top:1064px;width:85px;height:40px;color:#1a1a1a;font-size:24px;">容灾</div>
<div class="c " style="left:1419px;top:1115px;width:130px;height:40px;color:#1a1a1a;font-size:22.5px;">数据加密</div>
<div class="c " style="left:1542px;top:1115px;width:128px;height:40px;color:#1a1a1a;font-size:22.5px;">数据压缩</div>
<div class="c " style="left:1668px;top:1115px;width:127px;height:40px;color:#1a1a1a;font-size:22.5px;">日志审计</div>
<div class="c " style="left:1793px;top:1115px;width:104px;height:40px;color:#1a1a1a;font-size:24px;">Worm</div>
<div class="a st" style="left:654px;top:1194px;width:400px;height:42px;color:#ffc000;font-weight:bold;font-size:26.5px;line-height:42px;white-space:nowrap;">“</div>
<div class="a st" style="left:668px;top:1194px;width:400px;height:42px;color:#ffc000;font-weight:bold;font-size:26.5px;line-height:42px;white-space:nowrap;">存算网极致融合</div>
<div class="a st" style="left:852px;top:1194px;width:400px;height:42px;color:#ffc000;font-weight:bold;font-size:26.5px;line-height:42px;white-space:nowrap;">”</div>
<div class="a st" style="left:882px;top:1194px;width:400px;height:42px;color:#ffc000;font-weight:bold;font-size:26.5px;line-height:42px;white-space:nowrap;">企业内容管理平台底座</div>
<div class="a st" style="left:1148px;top:1194px;width:400px;height:42px;color:#ffc000;font-weight:bold;font-size:26.5px;line-height:42px;white-space:nowrap;">：</div>
<div class="a st" style="left:1175px;top:1194px;width:400px;height:42px;color:#ffc000;font-weight:bold;font-size:26.5px;line-height:42px;white-space:nowrap;">提供统一内容存储与处理能力</div>
</body></html>
